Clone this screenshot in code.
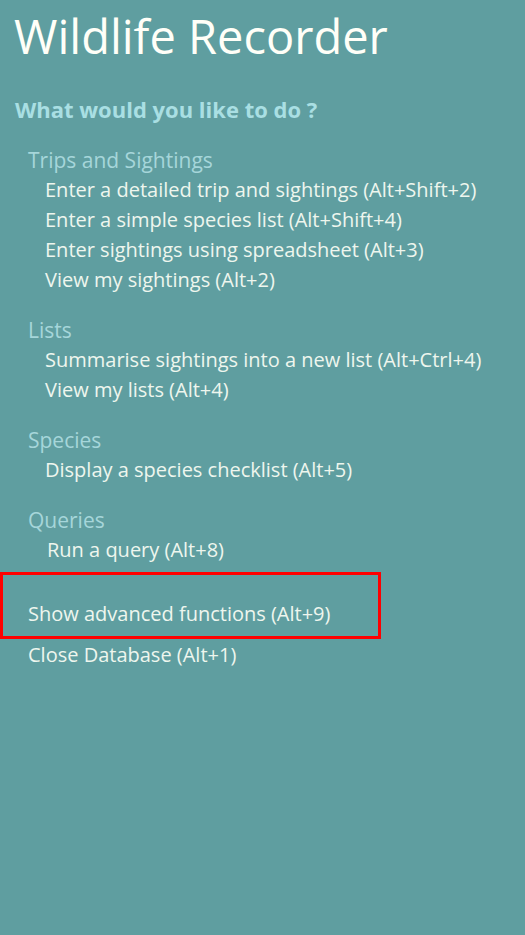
const sections = [
  {
    title: 'Trips and Sightings',
    items: [
      'Enter a detailed trip and sightings (Alt+Shift+2)',
      'Enter a simple species list (Alt+Shift+4)',
      'Enter sightings using spreadsheet (Alt+3)',
      'View my sightings (Alt+2)',
    ],
  },
  {
    title: 'Lists',
    items: ['Summarise sightings into a new list (Alt+Ctrl+4)', 'View my lists (Alt+4)'],
  },
  {
    title: 'Species',
    items: ['Display a species checklist (Alt+5)'],
  },
  {
    title: 'Queries',
    items: ['Run a query (Alt+8)'],
  },
];

export default function App() {
  return (
    <div className="min-h-screen bg-[#5f9ea0] font-['Open_Sans',sans-serif]">
      <h1 className="pl-[14px] pt-[8px] text-[47px] leading-[56px] text-[#fffff8]">Wildlife Recorder</h1>
      <p className="mt-[30px] pl-[15px] text-[22px] font-bold leading-[30px] text-[#a9dfe3]">
        What would you like to do ?
      </p>

      <div className="mt-[21px]">
        {sections.map((s) => (
          <div key={s.title} className="mb-[20px]">
            <div className="pl-[28px] text-[21px] leading-[30px] text-[#a6d6da]">{s.title}</div>
            {s.items.map((item) => (
              <div
                key={item}
                className={`${s.title === 'Queries' ? 'pl-[47px]' : 'pl-[45px]'} text-[20px] leading-[30px] text-[#eef6ee]`}
              >
                {item}
              </div>
            ))}
          </div>
        ))}
      </div>

      <div className="mt-[-13px] w-[381px] border-[3px] border-[#ff0000] pb-[7px] pl-[25px] pt-[24px]">
        <span className="text-[20px] leading-[30px] text-[#eef6ee]">Show advanced functions (Alt+9)</span>
      </div>
      <div className="pl-[28px] pt-[1px] text-[20px] leading-[30px] text-[#eef6ee]">Close Database (Alt+1)</div>
    </div>
  );
}
